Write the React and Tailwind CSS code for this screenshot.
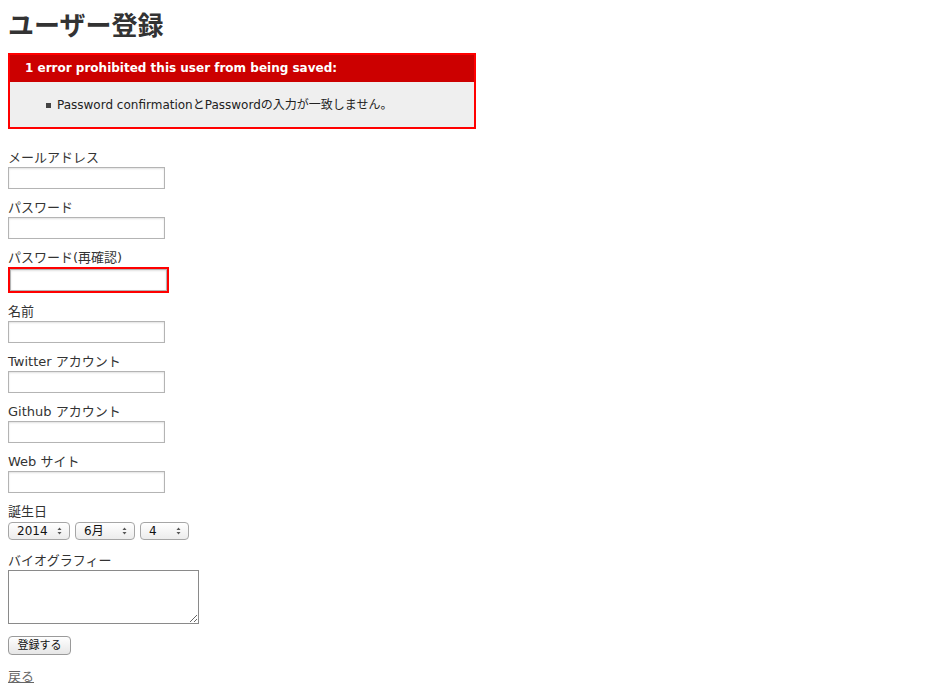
import React from 'react';

const font = { fontFamily: '"DejaVu Sans", Verdana, "Noto Sans CJK JP", sans-serif' };

const Field = ({ label, children, className = 'mb-[9px]' }) => (
    <div className={className}>
        <label className="block leading-[20px] h-[18px]">{label}</label>
        {children}
    </div>
);

const TextInput = () => (
    <input
        type="text"
        className="block mt-px w-[157px] h-[22px] border border-[#b4b4b4] bg-white shadow-[inset_0_1px_2px_rgba(0,0,0,0.12)] outline-none"
    />
);

const Arrows = () => (
    <svg width="5" height="8" viewBox="0 0 5 8" className="shrink-0">
        <path d="M2.5 0.5 L4.5 3 L0.5 3 Z" fill="#555" />
        <path d="M2.5 7.5 L4.5 5 L0.5 5 Z" fill="#555" />
    </svg>
);

const Select = ({ value, width }) => (
    <div
        className={`flex items-center justify-between h-[18px] pl-[8px] pr-[7px] rounded-[4px] border border-[#a6a6a6] bg-gradient-to-b from-white to-[#ececec] text-[12px] leading-none text-[#111] ${width}`}
    >
        <span>{value}</span>
        <Arrows />
    </div>
);

export default function App() {
    return (
        <div className="min-h-screen bg-white text-[#333] text-[13px] px-[8px] pt-[10px]" style={font}>
            <h1 className="text-[26px] font-bold leading-[32px] mb-[11px]">ユーザー登録</h1>

            {/* エラー */}
            <div className="w-[468px] border-2 border-[#ff0000] bg-[#efefef] mb-[19px]">
                <h2 className="bg-[#cc0000] text-white font-bold text-[12px] leading-[17px] pt-[5px] pb-[5px] pl-[15px]">
                    1 error prohibited this user from being saved:
                </h2>
                <ul className="pt-[14px] pb-[13px] pl-[36px]">
                    <li className="flex items-center text-[12px] leading-[18px] text-[#222]">
                        <span className="w-[5px] h-[5px] bg-[#444] mr-[6px]" />
                        Password confirmationとPasswordの入力が一致しません。
                    </li>
                </ul>
            </div>

            <Field label="メールアドレス"><TextInput /></Field>
            <Field label="パスワード"><TextInput /></Field>
            <Field label="パスワード(再確認)">
                <div className="mt-px w-fit p-[2px] bg-[#ff0000]">
                    <input
                        type="password"
                        className="block w-[157px] h-[22px] border border-[#b4b4b4] bg-white shadow-[inset_0_1px_2px_rgba(0,0,0,0.12)] outline-none"
                    />
                </div>
            </Field>
            <Field label="名前"><TextInput /></Field>
            <Field label="Twitter アカウント"><TextInput /></Field>
            <Field label="Github アカウント"><TextInput /></Field>
            <Field label="Web サイト"><TextInput /></Field>
            <Field label="誕生日" className="mb-[11px]">
                <div className="flex gap-[5px] mt-[2px]">
                    <Select value="2014" width="w-[62px]" />
                    <Select value="6月" width="w-[60px]" />
                    <Select value="4" width="w-[49px]" />
                </div>
            </Field>
            <Field label="バイオグラフィー" className="mb-[12px]">
                <textarea className="block mt-px w-[191px] h-[54px] border border-[#8a8a8a] bg-white resize outline-none" />
            </Field>

            <button className="block h-[19px] w-[63px] rounded-[4px] border border-[#9a9a9a] bg-gradient-to-b from-white to-[#e6e6e6] text-[11px] leading-none text-[#111] mb-[12px]">
                登録する
            </button>

            <a href="#" className="block w-fit leading-[20px] text-[#666] underline">戻る</a>
        </div>
    );
}
